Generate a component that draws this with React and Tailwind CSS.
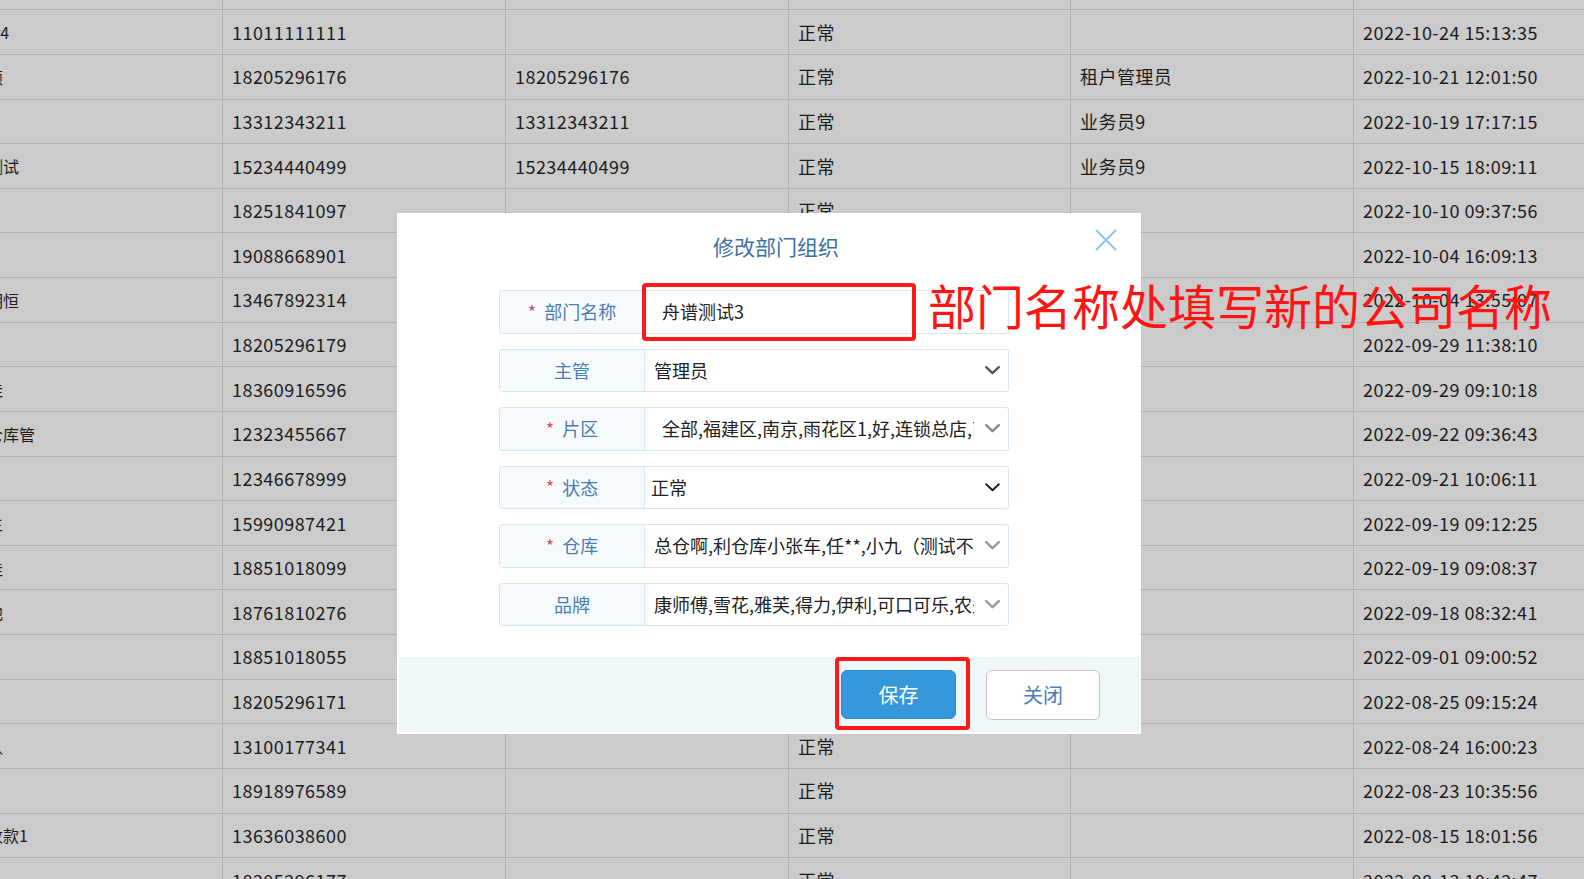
const rows = [
  ["", "", "", "", "", ""],
  ["Tester4", "11011111111", "", "正常", "", "2022-10-24 15:13:35"],
  ["王小颖", "18205296176", "18205296176", "正常", "租户管理员", "2022-10-21 12:01:50"],
  ["", "13312343211", "13312343211", "正常", "业务员9", "2022-10-19 17:17:15"],
  ["门店测试", "15234440499", "15234440499", "正常", "业务员9", "2022-10-15 18:09:11"],
  ["", "18251841097", "", "正常", "", "2022-10-10 09:37:56"],
  ["", "19088668901", "", "正常", "", "2022-10-04 16:09:13"],
  ["测试明恒", "13467892314", "", "正常", "", "2022-10-04 13:55:07"],
  ["", "18205296179", "", "正常", "", "2022-09-29 11:38:10"],
  ["李文佳", "18360916596", "", "正常", "", "2022-09-29 09:10:18"],
  ["测试仓库管", "12323455667", "", "正常", "", "2022-09-22 09:36:43"],
  ["", "12346678999", "", "正常", "", "2022-09-21 10:06:11"],
  ["业务主", "15990987421", "", "正常", "", "2022-09-19 09:12:25"],
  ["黄文佳", "18851018099", "", "正常", "", "2022-09-19 09:08:37"],
  ["刘小池", "18761810276", "", "正常", "", "2022-09-18 08:32:41"],
  ["", "18851018055", "", "正常", "", "2022-09-01 09:00:52"],
  ["", "18205296171", "", "正常", "", "2022-08-25 09:15:24"],
  ["李小认", "13100177341", "", "正常", "", "2022-08-24 16:00:23"],
  ["", "18918976589", "", "正常", "", "2022-08-23 10:35:56"],
  ["测试收款1", "13636038600", "", "正常", "", "2022-08-15 18:01:56"],
  ["", "18205296177", "", "正常", "", "2022-08-13 10:42:47"],
];

const fields = [
  { label: "部门名称", required: true, value: "舟谱测试3", pad: "pl-[17px]" },
  { label: "主管", value: "管理员", pad: "pl-[9px]", chevron: "#555555" },
  {
    label: "片区",
    required: true,
    value: "全部,福建区,南京,雨花区1,好,连锁总店,南京分店,测试片区",
    pad: "pl-[17px]",
    chevron: "#8a8a8a",
  },
  { label: "状态", required: true, value: "正常", pad: "pl-[6px]", chevron: "#1f1f1f", thin: true },
  {
    label: "仓库",
    required: true,
    value: "总仓啊,利仓库小张车,任**,小九（测试不要动）",
    pad: "pl-[9px]",
    chevron: "#9a9a9a",
  },
  {
    label: "品牌",
    value: "康师傅,雪花,雅芙,得力,伊利,可口可乐,农夫山泉",
    pad: "pl-[9px]",
    chevron: "#9a9a9a",
  },
];

const Chevron = ({ color, thin }) => (
  <svg width="15" height="9" viewBox="0 0 15 9" className="shrink-0 ml-[11px] mr-[8px]">
    <polyline
      points="1.2,1.2 7.5,7.2 13.8,1.2"
      fill="none"
      stroke={color}
      strokeWidth={thin ? 1.9 : 2.4}
      strokeLinecap="round"
      strokeLinejoin="round"
    />
  </svg>
);

const cell =
  "shrink-0 pl-[9px] border-r border-[#b2b2b2] flex items-center whitespace-nowrap overflow-hidden text-[18px] tracking-[0.45px]";

const Table = () => (
  <div className="mt-[-34.3px] flex flex-col text-[#1c1c1c]">
    {rows.map((r, i) => (
      <div key={i} className="flex h-[44.63px] shrink-0 border-b border-[#b2b2b2]">
        <div className="w-[283px] shrink-0 ml-[-60px] pl-[15px] border-r border-[#b2b2b2] flex items-center whitespace-nowrap overflow-hidden text-[16px]">
          {r[0]}
        </div>
        <div className={`w-[283px] ${cell}`}>{r[1]}</div>
        <div className={`w-[283px] ${cell}`}>{r[2]}</div>
        <div className={`w-[282px] ${cell}`}>{r[3]}</div>
        <div className={`w-[283px] ${cell}`}>{r[4]}</div>
        <div className="flex-1 pl-[9px] flex items-center whitespace-nowrap overflow-hidden text-[18px] tracking-[0.45px]">
          {r[5]}
        </div>
      </div>
    ))}
  </div>
);

const Modal = () => (
  <div className="absolute left-[397px] top-[213px] w-[744px] h-[521px] bg-white flex flex-col">
    <div className="h-[68px] shrink-0 flex items-center justify-center pl-[14px] text-[21px] text-[#3e70a3]">
      修改部门组织
    </div>
    <button className="absolute right-[24px] top-[16px] w-[22px] h-[22px]">
      <svg width="22" height="22" viewBox="0 0 22 22">
        <path d="M1 1 L21 21 M21 1 L1 21" stroke="#8ec6ec" strokeWidth="2" fill="none" />
      </svg>
    </button>

    <div className="ml-[102px] mt-[9px] w-[510px] flex flex-col gap-[15px]">
      {fields.map((f) => (
        <div key={f.label} className="h-[43.5px] flex border border-[#d9e5ee] rounded-[3px] overflow-hidden">
          <div className="w-[145px] shrink-0 bg-[#f5fafd] border-r border-[#dde8f0] flex items-center justify-center text-[18px] text-[#4b7db0]">
            {f.required && (
              <span className="text-[#d9534f] text-[18px] leading-none mr-[8px] relative top-[-1px]">*</span>
            )}
            {f.label}
          </div>
          <div className={`flex-1 min-w-0 flex items-center text-[18px] text-[#222222] ${f.pad}`}>
            <span className="flex-1 min-w-0 overflow-hidden whitespace-nowrap">{f.value}</span>
            {f.chevron && <Chevron color={f.chevron} thin={f.thin} />}
          </div>
        </div>
      ))}
    </div>

    <div className="mt-auto mx-[2px] mb-[2px] h-[75px] bg-[#eff7fb] flex items-center justify-end pr-[39px] gap-[30px]">
      <button className="w-[115px] h-[49px] rounded-[6px] bg-[#3498db] border border-[#2f8ccb] text-white text-[20px]">
        保存
      </button>
      <button className="w-[114px] h-[50px] rounded-[6px] bg-white border border-[#c4c4c4] text-[#4a80b5] text-[20px]">
        关闭
      </button>
    </div>
  </div>
);

export default function App() {
  return (
    <div className="relative w-[1584px] h-[879px] overflow-hidden bg-[#cbcbcb] font-['Noto_Sans_CJK_SC',sans-serif]">
      <Table />
      <Modal />

      {/* annotation marks */}
      <div className="absolute left-[642px] top-[283px] w-[274px] h-[58px] border-[4.5px] border-[#ff1a1a] rounded-[4px]" />
      <div className="absolute left-[928px] top-[280px] text-[48px] leading-none text-[#ff1414] whitespace-nowrap">
        部门名称处填写新的公司名称
      </div>
      <div className="absolute left-[835px] top-[657px] w-[135px] h-[73px] border-[4.5px] border-[#ff1a1a] rounded-[4px]" />
    </div>
  );
}
